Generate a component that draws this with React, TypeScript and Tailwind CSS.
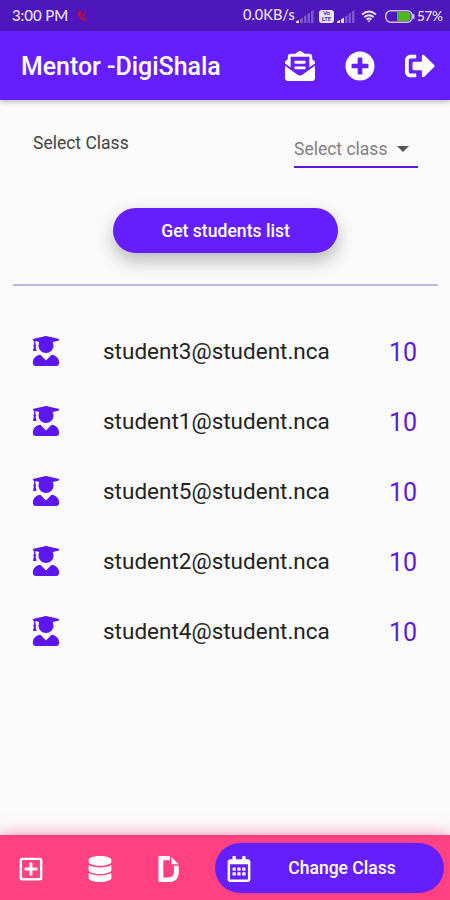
import React from "react";
import {
  FaDatabase,
  FaDochub,
  FaEnvelopeOpenText,
  FaPlusCircle,
  FaRegCalendarAlt,
  FaRegPlusSquare,
  FaSignOutAlt,
  FaUserGraduate,
} from "react-icons/fa";

const students = [
  { email: "student3@student.nca", score: 10 },
  { email: "student1@student.nca", score: 10 },
  { email: "student5@student.nca", score: 10 },
  { email: "student2@student.nca", score: 10 },
  { email: "student4@student.nca", score: 10 },
];

function Signal({ strong }: { strong?: boolean }) {
  return (
    <svg width="18" height="13" viewBox="0 0 18 13" fill="#ece4ff">
      <path d="M0 13v-1.500L3 10v3z" />
      <path d="M4 13V9.500L7 7.500V13z" opacity={strong ? 1 : 0.3} />
      <path d="M8 13V6.500l2.500-1.500v8z" opacity="0.3" />
      <path d="M11.500 13V4L14 2.500V13z" opacity="0.3" />
      <path d="M15 13V1.500L17.500 0v13z" opacity="0.3" />
    </svg>
  );
}

function StatusBar() {
  return (
    <div className="h-[31px] shrink-0 bg-[#4e17bd] flex items-center pl-3 pr-2 text-[#ece4ff] font-['Lato',sans-serif] font-medium leading-none whitespace-nowrap">
      <span className="w-[58px] pb-px text-[15px] tracking-[-0.1px]">3:00 PM</span>
      <svg className="ml-[6px]" width="12" height="12" viewBox="0 0 12 12" fill="none">
        <path
          d="M2.2 1.2C0 4.500 4.500 11 9.500 10.800l1-1.600-2.400-1.900-1.300.8C5.600 7.500 4.500 6 4.400 4.800l1-.9L4.300 1z"
          fill="#c20d34"
        />
        <path d="M10.500 1.500 6.800 5.200M6.800 2.500v2.700h2.700" stroke="#a80f4b" strokeWidth="1.200" />
      </svg>
      <div className="ml-auto flex items-center">
        <span className="w-[52px] text-[14.500px]">0.0KB/s</span>
        <span className="ml-[1px] mt-[1px]">
          <Signal />
        </span>
        <span className="ml-[5px] mt-[1px] w-[15px] h-[13px] rounded-[3px] bg-[#ece4ff] text-[#4e17bd] flex flex-col items-center justify-center text-[6px] leading-[6px] font-bold">
          <span>Vo</span>
          <span>LTE</span>
        </span>
        <span className="ml-[3px] mt-[1px]">
          <Signal strong />
        </span>
        <svg className="ml-[6px] mt-[1px]" width="16" height="13" viewBox="0 0 16 13" fill="none" stroke="#ece4ff" strokeWidth="1.900">
          <path d="M1 4.500Q8-1.500 15 4.500M3.300 7.100Q8 3.200 12.700 7.100M5.600 9.500Q8 7.500 10.400 9.500" />
          <path d="M6.500 10.500h3L8 12.500z" fill="#ece4ff" stroke="none" />
        </svg>
        <svg className="ml-[8px] mt-[1px]" width="30" height="13" viewBox="0 0 30 13">
          <rect x="0.750" y="0.750" width="26.500" height="11.500" rx="5" fill="none" stroke="#d3c3f5" strokeWidth="1.500" />
          <path d="M12 2h10.500q3 0 3 3v3q0 3-3 3H12z" fill="#4db81e" />
          <rect x="28" y="4" width="1.500" height="5" rx="0.700" fill="#d3c3f5" />
        </svg>
        <span className="ml-[2px] mt-[2px] w-[25px] text-[13.500px] tracking-[-0.3px]">57%</span>
      </div>
    </div>
  );
}

function AppBar() {
  return (
    <header className="relative h-[69px] shrink-0 bg-[#651fff] flex items-center justify-between pl-[21px] pr-[15px] text-white shadow-[0_2px_5px_rgba(0,0,0,0.25)]">
      <h1 className="pt-1 text-[24.900px] font-medium leading-none whitespace-nowrap">Mentor -DigiShala</h1>
      <div className="flex items-center gap-[30px]">
        <FaEnvelopeOpenText size={30} />
        <FaPlusCircle size={30} />
        <FaSignOutAlt size={30} />
      </div>
    </header>
  );
}

function ClassPicker() {
  return (
    <div className="flex items-start justify-between pl-[33px] pr-8 pt-[33px]">
      <span className="text-[17.500px] leading-5 text-[#444]">Select Class</span>
      <button className="mt-[2px] w-[124px] h-[33px] flex items-center justify-between pr-[9px] pb-[3px] border-b-2 border-[#5a16e0] text-[17.500px] leading-5 text-[#808080] whitespace-nowrap">
        Select class
        <svg width="12" height="6" viewBox="0 0 12 6">
          <path d="M0 0h12L6 6z" fill="#555" />
        </svg>
      </button>
    </div>
  );
}

export default function App() {
  return (
    <div className="w-[450px] h-[900px] flex flex-col overflow-hidden bg-[#fafafa] font-['Roboto',sans-serif]">
      <StatusBar />
      <AppBar />
      <main className="flex-1 flex flex-col">
        <ClassPicker />
        <button className="mt-10 pt-[2px] ml-[113px] w-[225px] h-[45px] shrink-0 rounded-full bg-[#651fff] text-white text-[17.600px] font-medium shadow-[0_8px_18px_rgba(0,0,0,0.26)]">
          Get students list
        </button>
        <hr className="mt-[31px] ml-[13px] mr-3 border-0 h-[2px] bg-[#bdb4e0]" />
        <ul className="mt-[30px]">
          {students.map((student) => (
            <li key={student.email} className="h-[70px] flex items-center pl-[31px] pr-[33px]">
              <FaUserGraduate size={30} className="text-[#5c17ee]" />
              <span className="ml-[42px] pt-[2px] text-[22.500px] text-[#222]">{student.email}</span>
              <span className="ml-auto pt-1 text-[25px] text-[#5b1bdc]">{student.score}</span>
            </li>
          ))}
        </ul>
      </main>
      <nav className="relative h-[65px] shrink-0 bg-[#ff4081] flex items-center pl-[18px] pr-[6px] text-white shadow-[0_0_15px_rgba(255,64,129,0.6)]">
        <div className="pt-[3px] flex items-center gap-[43px]">
          <FaRegPlusSquare size={26} />
          <FaDatabase size={26} />
          <FaDochub size={26} />
        </div>
        <button className="ml-auto w-[229px] h-[50px] rounded-full bg-[#651fff] flex items-center pl-[11px]">
          <FaRegCalendarAlt size={26} className="mt-[2px]" />
          <span className="flex-1 pt-[2px] pr-3 text-center text-[17.500px] font-medium">Change Class</span>
        </button>
      </nav>
    </div>
  );
}
